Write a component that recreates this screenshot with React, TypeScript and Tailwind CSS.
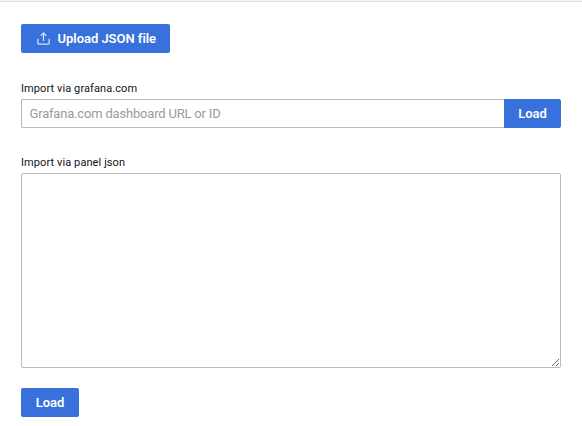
import type { ReactNode } from "react";

function Button({ children, className = "" }: { children: ReactNode; className?: string }) {
  return (
    <button
      type="button"
      className={`flex h-[29px] shrink-0 items-center bg-[#3871dc] text-[13px] leading-none font-semibold text-white ${className}`}
    >
      {children}
    </button>
  );
}

function UploadIcon() {
  return (
    <svg viewBox="0 0 24 24" className="mr-[7px] h-[15px] w-[15px] opacity-80" fill="currentColor" aria-hidden="true">
      <path d="M8.71,7.71,11,5.41V15a1,1,0,0,0,2,0V5.41l2.29,2.3a1,1,0,0,0,1.42,0,1,1,0,0,0,0-1.42l-4-4a1,1,0,0,0-.33-.21,1,1,0,0,0-.76,0,1,1,0,0,0-.33.21l-4,4A1,1,0,1,0,8.71,7.71ZM21,12a1,1,0,0,0-1,1v6a1,1,0,0,1-1,1H5a1,1,0,0,1-1-1V13a1,1,0,0,0-2,0v6a3,3,0,0,0,3,3H19a3,3,0,0,0,3-3V13A1,1,0,0,0,21,12Z" />
    </svg>
  );
}

export default function App() {
  return (
    <div className="h-[426px] w-[582px] overflow-hidden bg-white font-['Roboto',sans-serif] text-[#24292e]">
      <div className="h-0.5 border-b border-[#dfdfdf] bg-[#f4f5f5]" />
      <main className="flex flex-col items-start pt-[22px] pr-[21px] pl-[21px]">
        <Button className="w-[149px] rounded-[2px] pl-[14.5px] tracking-[-0.03px]">
          <UploadIcon />
          Upload JSON file
        </Button>

        <label htmlFor="url" className="mt-[29px] h-[17px] text-[11px] leading-[14px] font-normal tracking-[0.09px] text-[#111418]">
          Import via grafana.com
        </label>
        <div className="flex w-full">
          <input
            id="url"
            placeholder="Grafana.com dashboard URL or ID"
            className="h-[29px] min-w-0 flex-1 rounded-l-[2px] border border-r-0 border-[#b9babb] px-[7.5px] text-[13px] tracking-[-0.19px] outline-none placeholder:text-[#999b9d]"
          />
          <Button className="w-[57px] justify-center rounded-r-[2px]">Load</Button>
        </div>

        <label htmlFor="json" className="mt-[28px] h-[17px] text-[11px] leading-[14px] font-normal tracking-[0.09px] text-[#111418]">
          Import via panel json
        </label>
        <textarea
          id="json"
          className="block h-[195px] w-full resize rounded-[2px] border border-[#b9babb] px-2 py-1 text-[13px] outline-none"
        />
        <Button className="mt-[20px] w-[58px] justify-center rounded-[2px]">Load</Button>
      </main>
    </div>
  );
}
